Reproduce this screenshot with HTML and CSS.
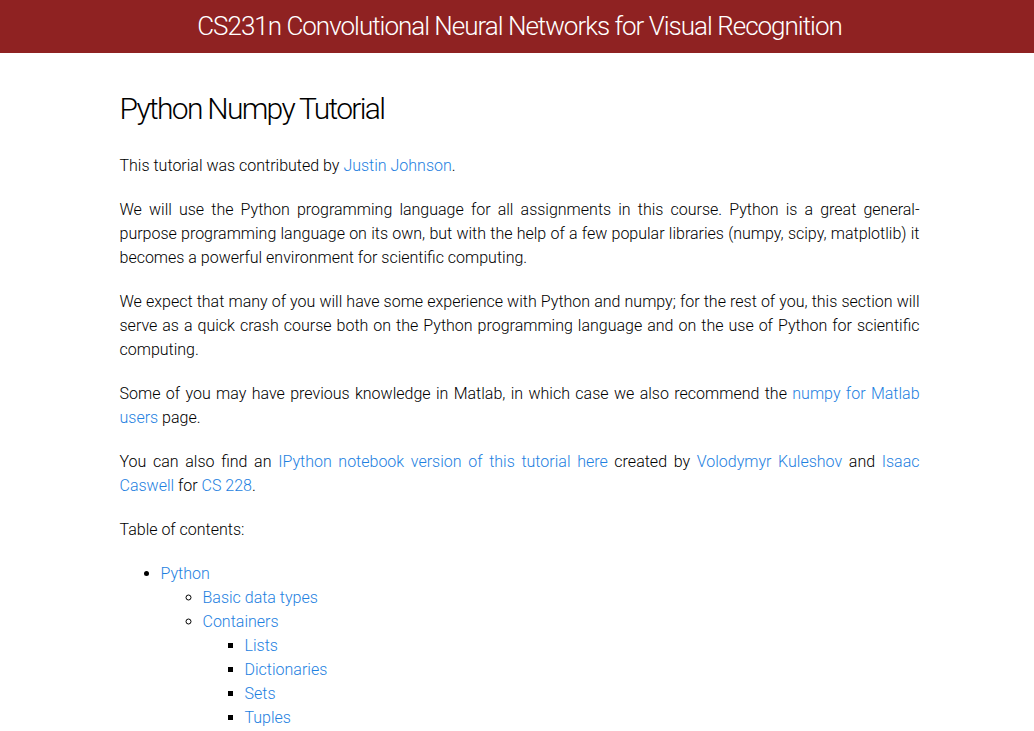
FILE: index.html
```html
<!DOCTYPE html>
<html>
<head>
<meta charset="utf-8">
<link rel="stylesheet" href="styles.css">
</head>
<body>
<header class="site-header">
  <a class="site-title" href="#">CS231n Convolutional Neural Networks for Visual Recognition</a>
</header>
<main class="page">
  <h1 class="post-title">Python Numpy Tutorial</h1>
  <p>This tutorial was contributed by <a href="#">Justin Johnson</a>.</p>
  <p>We will use the Python programming language for all assignments in this course. Python is a great general-purpose programming language on its own, but with the help of a few popular libraries (numpy, scipy, matplotlib) it becomes a powerful environment for scientific computing.</p>
  <p>We expect that many of you will have some experience with Python and numpy; for the rest of you, this section will serve as a quick crash course both on the Python programming language and on the use of Python for scientific computing.</p>
  <p>Some of you may have previous knowledge in Matlab, in which case we also recommend the <a href="#">numpy for Matlab users</a> page.</p>
  <p>You can also find an <a href="#">IPython notebook version of this tutorial here</a> created by <a href="#">Volodymyr Kuleshov</a> and <a href="#">Isaac Caswell</a> for <a href="#">CS 228</a>.</p>
  <p>Table of contents:</p>
  <ul class="toc">
    <li><a href="#">Python</a>
      <ul>
        <li><a href="#">Basic data types</a></li>
        <li><a href="#">Containers</a>
          <ul>
            <li><a href="#">Lists</a></li>
            <li><a href="#">Dictionaries</a></li>
            <li><a href="#">Sets</a></li>
            <li><a href="#">Tuples</a></li>
          </ul>
        </li>
      </ul>
    </li>
  </ul>
</main>
</body>
</html>
```
FILE: styles.css
```css
html, body {
  margin: 0;
  padding: 0;
}
body {
  font-family: Roboto, "Liberation Sans", sans-serif;
  font-weight: 300;
  font-size: 16px;
  line-height: 24px;
  color: #000;
  background: #fff;
}
a {
  color: #1e7fdf;
  text-decoration: none;
}
.site-header {
  background-color: #8f2222;
  height: 53px;
  display: flex;
  align-items: center;
  justify-content: center;
  padding-left: 5px;
}
.site-title {
  color: #fff;
  font-size: 26px;
  font-weight: 300;
  letter-spacing: -1px;
  line-height: 53px;
}
.page {
  width: 800px;
  margin: 0 auto;
  padding: 38px 0 0 5px;
}
.post-title {
  font-size: 30px;
  font-weight: 300;
  letter-spacing: -1.7px;
  line-height: 36px;
  margin: 0 0 27px;
}
p {
  margin: 0 0 20px;
  text-align: justify;
}
.toc {
  margin: 0;
  padding-left: 41px;
  list-style: disc;
}
.toc ul {
  margin: 0;
  padding-left: 42px;
  list-style: circle;
}
.toc ul ul {
  list-style: square;
}
```
